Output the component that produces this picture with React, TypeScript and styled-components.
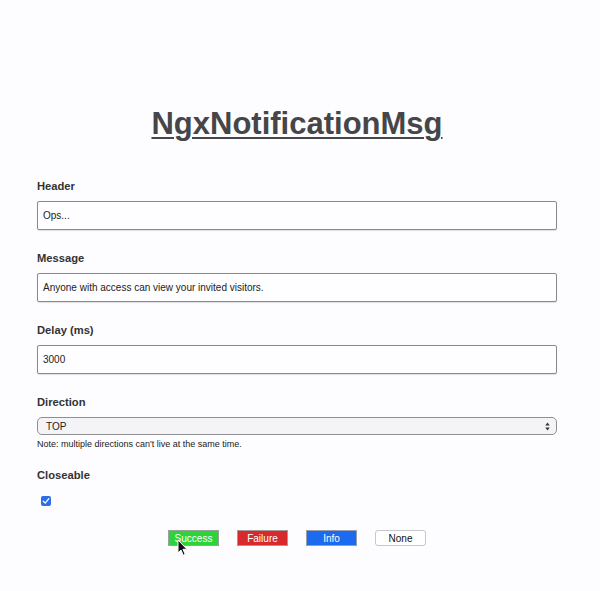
import React from "react";
import styled, { createGlobalStyle } from "styled-components";

const Global = createGlobalStyle`
  html, body { margin: 0; padding: 0; background: #fdfcfe; }
  body { font-family: "Liberation Sans", Arial, Helvetica, sans-serif; color: #333; }
`;

const Page = styled.div`
  width: 600px;
  height: 591px;
  box-sizing: border-box;
  padding: 106px 43px 0 37px;
  display: flex;
  flex-direction: column;
`;

const Title = styled.h1`
  margin: 0 0 37px;
  font-size: 31px;
  line-height: 36px;
  font-weight: 700;
  color: #464547;
  text-align: center;
  text-decoration: underline;
  text-decoration-thickness: 2px;
  text-underline-offset: 3px;
`;

const Field = styled.div<{ $gap?: number }>`
  display: flex;
  flex-direction: column;
  margin-bottom: ${(p) => p.$gap ?? 21}px;
`;

const Label = styled.label`
  font-size: 11.2px;
  line-height: 14px;
  font-weight: 700;
  color: #333;
  margin-bottom: 8px;
`;

const TextInput = styled.div`
  height: 29px;
  box-sizing: border-box;
  border: 1px solid #8a898c;
  border-radius: 2px;
  background: #fefdff;
  box-shadow: 0 1px 1px rgba(0, 0, 0, 0.12);
  padding: 0 5px;
  display: flex;
  align-items: center;
  font-size: 10px;
  color: #222;
`;

const Select = styled.div`
  height: 18px;
  box-sizing: border-box;
  border: 1px solid #8f8e92;
  border-radius: 5px;
  background: #f4f3f5;
  padding: 0 6px 0 8px;
  display: flex;
  align-items: center;
  justify-content: space-between;
  font-size: 10px;
  color: #222;
`;

const Note = styled.div`
  margin-top: 4px;
  font-size: 9px;
  line-height: 11px;
  color: #222;
`;

const Check = styled.div`
  margin: 0 0 24px 4px;
  width: 10px;
  height: 10px;
  border-radius: 2px;
  background: #2c6ee8;
  display: flex;
  align-items: center;
  justify-content: center;
`;

const Buttons = styled.div`
  display: flex;
  justify-content: center;
  gap: 18px;
  position: relative;
`;

const Btn = styled.div<{ $bg: string; $fg: string; $radius: number; $border: string }>`
  width: 51px;
  height: 16px;
  box-sizing: border-box;
  background: ${(p) => p.$bg};
  color: ${(p) => p.$fg};
  border: 1px solid ${(p) => p.$border};
  border-radius: ${(p) => p.$radius}px;
  font-size: 10px;
  display: flex;
  align-items: center;
  justify-content: center;
`;

const Cursor = styled.svg`
  position: absolute;
  left: 140px;
  top: 9px;
`;

export default function App() {
  return (
    <>
      <Global />
      <Page>
        <Title>NgxNotificationMsg</Title>
        <Field>
          <Label>Header</Label>
          <TextInput>Ops...</TextInput>
        </Field>
        <Field>
          <Label>Message</Label>
          <TextInput>Anyone with access can view your invited visitors.</TextInput>
        </Field>
        <Field>
          <Label>Delay (ms)</Label>
          <TextInput>3000</TextInput>
        </Field>
        <Field $gap={18}>
          <Label>Direction</Label>
          <Select>
            <span>TOP</span>
            <svg width="5" height="9" viewBox="0 0 5 9">
              <path d="M2.5 0.5 L4.7 3.6 H0.3 Z M2.5 8.5 L4.7 5.4 H0.3 Z" fill="#333" />
            </svg>
          </Select>
          <Note>Note: multiple directions can't live at the same time.</Note>
        </Field>
        <Field $gap={6}>
          <Label>Closeable</Label>
        </Field>
        <Check>
          <svg width="8" height="8" viewBox="0 0 8 8">
            <path d="M1.3 4.3 L3.2 6.1 L6.8 1.6" stroke="#fff" strokeWidth="1.3" fill="none" strokeLinecap="round" strokeLinejoin="round" />
          </svg>
        </Check>
        <Buttons>
          <Btn $bg="#2dd33a" $fg="#fff" $radius={0} $border="#9aa19a">Success</Btn>
          <Btn $bg="#d8292c" $fg="#fff" $radius={0} $border="#a59a9a">Failure</Btn>
          <Btn $bg="#1b6af0" $fg="#fff" $radius={0} $border="#9a9eaa">Info</Btn>
          <Btn $bg="#fff" $fg="#111" $radius={3} $border="#c8c7cb">None</Btn>
          <Cursor width="12" height="18" viewBox="0 0 12 18">
            <path d="M1 1 L1 14 L4 11 L6.2 16.2 L8.2 15.3 L6 10.3 L10 10.3 Z" fill="#111" stroke="#fff" strokeWidth="1" strokeLinejoin="round" />
          </Cursor>
        </Buttons>
      </Page>
    </>
  );
}
